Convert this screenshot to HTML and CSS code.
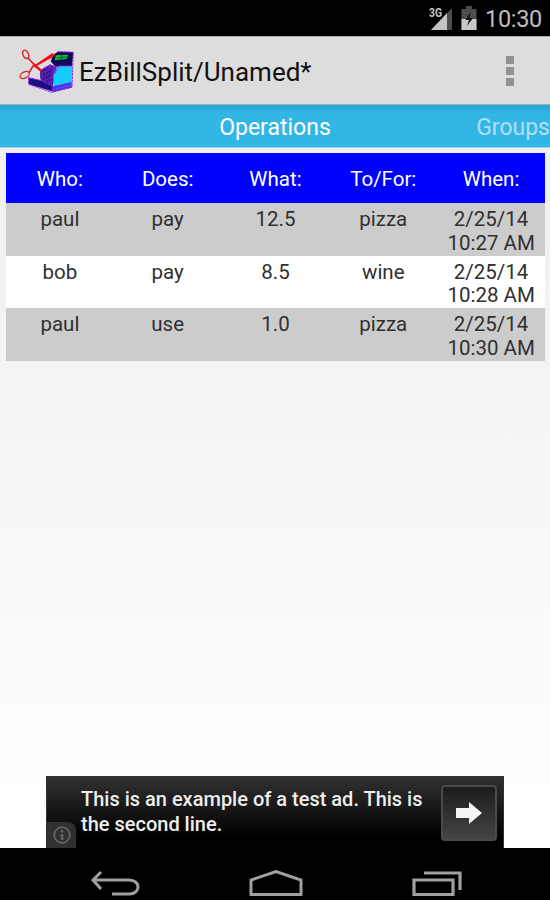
FILE: index.html
```html
<!doctype html>
<html>
<head>
<title>EzBillSplit</title>
<meta charset="utf-8" />
<link rel="stylesheet" href="styles.css">
</head>

<body>
<div class="status">
	<svg class="signal" width="26" height="26" viewBox="0 0 26 26">
		<path d="M23 4v22H2z" fill="#4d4d4d" />
		<path d="M18 9v17H2z" fill="#c4c4c4" />
		<path d="M0 2h13v13H0z" fill="#000" />
		<text x="0" y="13" class="net" textLength="13" lengthAdjust="spacingAndGlyphs">3G</text>
	</svg>
	<svg class="battery" width="16" height="26" viewBox="0 0 16 26">
		<path d="M5 2h6v3h4.500v21H.5V5H5z" fill="#4d4d4d" />
		<path d="M.5 15h15v11H.5z" fill="#c8c8c8" />
		<path d="M9.500 8L4.500 16h3.500l-2 6 6-8H8.500z" fill="#111" />
	</svg>
	<span class="clock">10:30</span>
</div>

<div class="bar">
	<svg class="logo" width="57" height="46" viewBox="6 12 171 138">
		<!-- cash register -->
		<path d="M112 32l14-9 46 1-4 42-50 2-14-16z" fill="#12085a" />
		<path d="M72 78l30-16 20 8-8 38-6 33-30-18-6-24z" fill="#5a1fb0" />
		<path d="M38 101l40 9 34 17-4 15-70-21z" fill="#1c1080" />
		<path d="M126 66l42 1-1 48-53 13-2-36z" fill="#12cdfb" />
		<path d="M112 127l55-13v17l-57 13z" fill="#6a20e0" />
		<path d="M118 131l46-10v5l-46 11z" fill="#2a60f5" />
		<path d="M120 34l36-2-4 13-36 4z" fill="#12c52c" />
		<path d="M138 32l-4 16M122 42l30-3" stroke="#12502e" stroke-width="3" fill="none" />
		<path d="M76 84l20-12M82 94l24-14M80 106l30-16M90 114l18-10" stroke="#24106e" stroke-width="5" stroke-dasharray="6 4" />
		<path d="M38 101l36 8 38 18-3 16M38 101v20l70 24 60-16 4-104-48-2M72 80l30-18 16 6-8 24M168 66h-40l-14 26" stroke="#8b24ee" stroke-width="3" fill="none" stroke-dasharray="8 2" />
		<!-- scissors -->
		<path d="M52 66l56-38 9 2-2 7-58 32zM56 58l22 20-2 7-24-19z" fill="#f01018" />
		<ellipse cx="29" cy="31" rx="8" ry="13" transform="rotate(-24 29 31)" fill="none" stroke="#dc2020" stroke-width="4" />
		<ellipse cx="26" cy="93" rx="15" ry="9" transform="rotate(-28 26 93)" fill="none" stroke="#dc2828" stroke-width="4" />
		<path d="M36 42l18 19-15 25" fill="none" stroke="#e21c20" stroke-width="5" />
	</svg>
	<span class="title">EzBillSplit/Unamed*</span>
	<div class="more"><i></i><i></i><i></i></div>
</div>

<div class="tabs">
	<span class="tab now">Operations</span>
	<span class="tab next">Groups</span>
</div>

<div class="content">
	<table class="ops">
		<tr><th>Who:</th><th>Does:</th><th>What:</th><th>To/For:</th><th>When:</th></tr>
		<tr class="gray"><td>paul</td><td>pay</td><td>12.5</td><td>pizza</td><td>2/25/14<br>10:27 AM</td></tr>
		<tr><td>bob</td><td>pay</td><td>8.5</td><td>wine</td><td>2/25/14<br>10:28 AM</td></tr>
		<tr class="gray"><td>paul</td><td>use</td><td>1.0</td><td>pizza</td><td>2/25/14<br>10:30 AM</td></tr>
	</table>

	<div class="ad">
		<div class="info">
			<svg width="18" height="18" viewBox="0 0 18 18">
				<circle cx="9" cy="9" r="7.800" fill="none" stroke="#666" stroke-width="1.700" />
				<path d="M9 4v2.500M9 8v6" stroke="#666" stroke-width="2.500" />
			</svg>
		</div>
		<p>This is an example of a test ad. This is<br>the second line.</p>
		<div class="go">
			<svg width="28" height="24" viewBox="0 0 28 24">
				<path d="M1 7h13V1l13 11-13 11v-6H1z" fill="#f4f4f4" />
			</svg>
		</div>
	</div>
</div>

<div class="nav">
	<svg width="50" height="28" viewBox="0 0 50 28">
		<path d="M11 2L3 10l8 9M3 10h36c12 0 12 14 0 14H22" fill="none" stroke="#a0a0a0" stroke-width="3" />
	</svg>
	<svg width="54" height="28" viewBox="0 0 54 28">
		<path d="M2 24.500V10L27 1.500 52 10v14.500z" fill="none" stroke="#a0a0a0" stroke-width="3" />
	</svg>
	<svg width="52" height="28" viewBox="0 0 52 28">
		<path d="M3 10h39v14.500H3zM13 3h36v17" fill="none" stroke="#a0a0a0" stroke-width="3.200" />
	</svg>
</div>
</body>
</html>
```

FILE: styles.css
```css
* { box-sizing: border-box; }
body { margin: 0; height: 900px; display: flex; flex-direction: column; overflow: hidden; background: #000; font-family: Roboto, "Liberation Sans", sans-serif; }
svg { display: block; flex: none; }

.status { height: 36px; flex: none; display: flex; align-items: flex-start; justify-content: flex-end; padding: 4px 8px 0 0; }
.signal { margin-right: 6px; }
.battery { margin: 0 8px 0 0; }
.net { font: bold 12.5px Roboto, sans-serif; fill: #c4c4c4; }
.clock { width: 57px; font-size: 23.5px; line-height: 31px; letter-spacing: -0.3px; color: #bebebe; white-space: nowrap; }

.bar { height: 69px; flex: none; display: flex; align-items: center; padding-left: 18px; background: #ddd; border-top: 1px solid #aaa; border-bottom: 1px solid #9cb4bc; }
.title { margin: 2px 0 0 4px; font-size: 26px; line-height: 34px; color: #111; white-space: nowrap; }
.more { margin: 0 36px 0 auto; display: flex; flex-direction: column; gap: 3px; }
.more i { width: 8px; height: 8px; background: #929292; }

.tabs { height: 43px; flex: none; display: grid; grid-template-columns: 1fr auto 1fr; align-items: center; padding-top: 3px; background: linear-gradient(#29a5d5, #33b5e5 8px); border-bottom: 1px solid #93d5ef; color: #fff; font-size: 23px; }
.now { grid-column: 2; }
.next { text-align: right; opacity: .6; }

.content { height: 700px; flex: none; display: flex; flex-direction: column; justify-content: space-between; padding: 5px 5px 0 6px; background: linear-gradient(#efefef, #fff 95%); }
.ops { width: 539px; table-layout: fixed; border-collapse: collapse; background: #fff; color: #303030; font-size: 20.5px; line-height: 23.5px; text-align: center; }
.ops th { height: 50px; padding: 4px 0 0; background: #00f; color: #fff; font-weight: 400; font-size: 20.5px; }
.ops td { height: 52.6px; padding: 5px 0 0; vertical-align: top; }
.gray { background: #ccc; }

.ad { position: relative; width: 458px; height: 72px; margin-left: 40px; display: flex; padding: 8px 6px 0 34px; background: linear-gradient(#303030, #000 85%); border: solid #333; border-width: 2px 1px 0; }
.ad p { margin: 1px 0 0; color: #eee; font-size: 20px; line-height: 24.5px; font-weight: 500; white-space: nowrap; }
.info { position: absolute; left: 0; bottom: 0; width: 29px; height: 26px; padding: 4px 0 0 6px; background: #303030; border-radius: 0 8px 0 0; }
.go { width: 56px; height: 56px; margin: -1px 0 0 auto; display: flex; align-items: center; justify-content: center; background: linear-gradient(#1c1c1c, #444); border: 2px solid #4a4a4a; border-radius: 4px; }

.nav { height: 52px; flex: none; display: flex; justify-content: space-between; padding: 22px 87px 0 90px; background: #000; }
```
